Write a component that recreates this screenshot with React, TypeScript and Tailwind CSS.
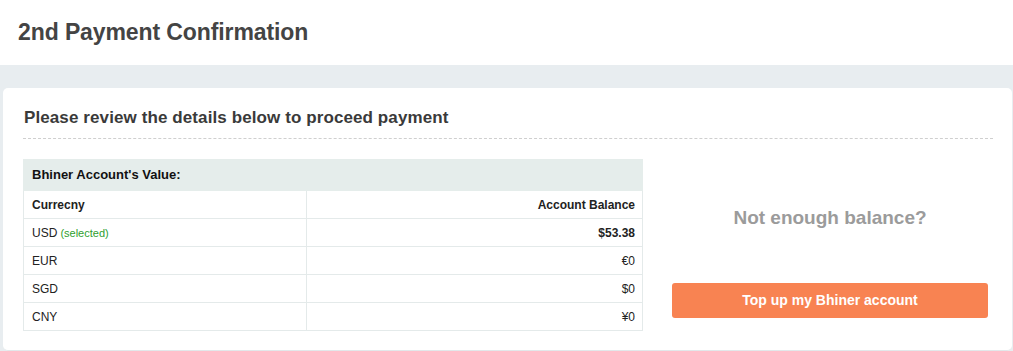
import React from "react"

const rows = [
  { cur: "USD", selected: true, value: "$53.38", bold: true },
  { cur: "EUR", selected: false, value: "€0", bold: false },
  { cur: "SGD", selected: false, value: "$0", bold: false },
  { cur: "CNY", selected: false, value: "¥0", bold: false },
]

export default function App() {
  return (
    <div className="w-[1013px] h-[351px] overflow-hidden bg-[#e8edf0] font-['Liberation_Sans',Arial,sans-serif]">
      <header className="h-[65px] bg-white flex items-center px-[18px]">
        <h1 className="text-[23px] font-bold text-[#444] tracking-[-0.1px]">2nd Payment Confirmation</h1>
      </header>

      <div className="pt-[23px] pl-[3px] pr-[1px]">
        <div className="bg-white rounded-[5px] pl-[20px] pr-[19px] pt-[20px] pb-[19px] border-b border-[#e2e8ea]">
          <h2 className="text-[17px] leading-[20px] font-bold text-[#3a3a3a] tracking-[0.1px] pl-[1px] pb-[10px] border-b border-dashed border-[#cfcfcf]">
            Please review the details below to proceed payment
          </h2>

          <div className="flex mt-[20px]">
            <table className="w-[620px] border-collapse text-[12px] text-[#222]">
              <thead>
                <tr>
                  <th colSpan={2} className="h-[31px] bg-[#e5edeb] text-left font-bold text-[13px] text-[#111] px-[8px] border border-[#e5edeb]">
                    Bhiner Account's Value:
                  </th>
                </tr>
              </thead>
              <tbody>
                <tr className="h-[28px]">
                  <td className="w-[283px] px-[8px] font-bold border border-[#e4eaea]">Currecny</td>
                  <td className="pl-[8px] pr-[7px] text-right font-bold border border-[#e4eaea]">Account Balance</td>
                </tr>
                {rows.map((r) => (
                  <tr key={r.cur} className="h-[28px]">
                    <td className="px-[8px] border border-[#e4eaea]">
                      {r.cur}
                      {r.selected && <span className="text-[11px] text-[#2ea02e]"> (selected)</span>}
                    </td>
                    <td className={"pl-[8px] pr-[7px] text-right border border-[#e4eaea] " + (r.bold ? "font-bold" : "")}>{r.value}</td>
                  </tr>
                ))}
              </tbody>
            </table>

            <div className="ml-[29px] w-[316px] flex flex-col items-center">
              <p className="mt-[45px] text-[19px] font-bold text-[#9b9b9b]">Not enough balance?</p>
              <button className="mt-[50px] w-full h-[35px] rounded-[3px] bg-[#f88352] text-white text-[14px] font-bold">
                Top up my Bhiner account
              </button>
            </div>
          </div>
        </div>
      </div>
    </div>
  )
}
